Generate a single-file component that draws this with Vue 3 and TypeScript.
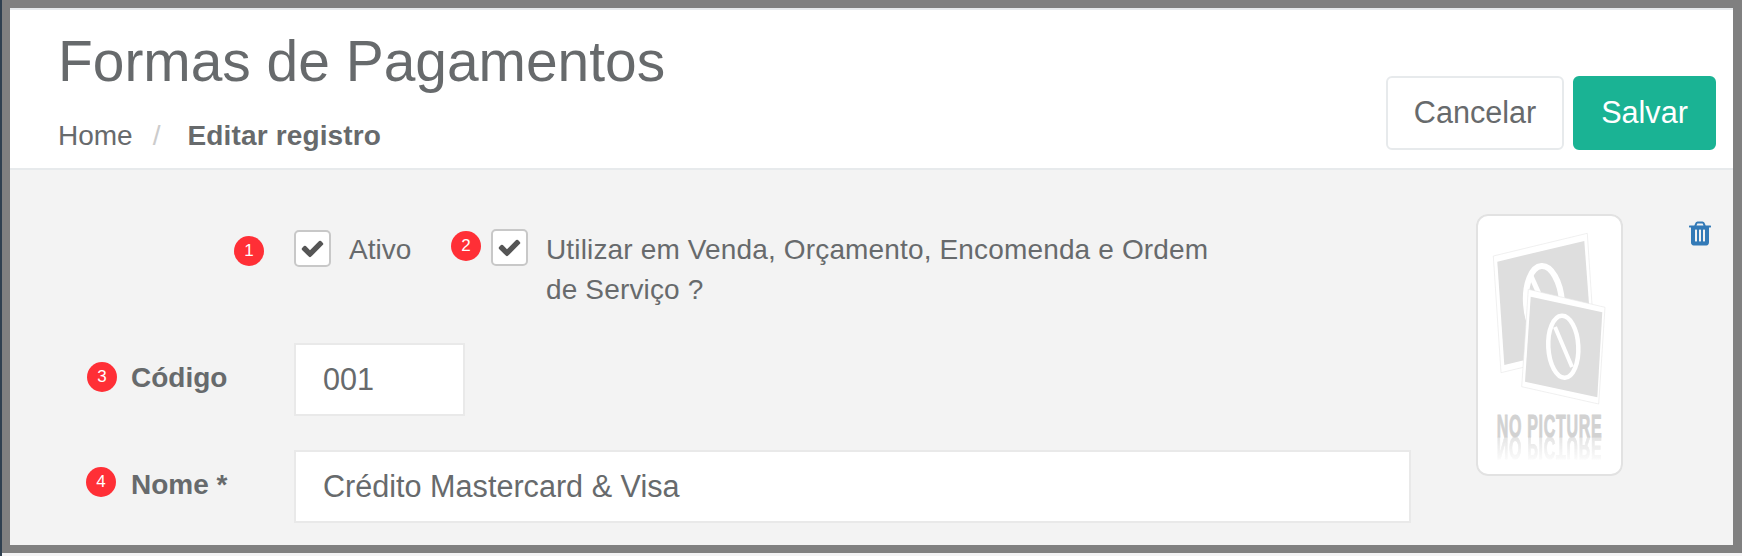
<template>
  <div class="page">
    <div class="frame">
      <header class="top">
        <div class="heading">
          <h2>{{ title }}</h2>
          <ol class="crumbs">
            <li>Home</li>
            <li class="sep">/</li>
            <li class="current">Editar registro</li>
          </ol>
        </div>
        <div class="actions">
          <button class="btn btn-default">Cancelar</button>
          <button class="btn btn-primary">Salvar</button>
        </div>
      </header>

      <main class="content">
        <form class="fields" @submit.prevent>
          <div class="row row-checks">
            <span class="badge b1">1</span>
            <span class="check first">
              <svg viewBox="0 0 1792 1792"><path :d="checkPath" /></svg>
            </span>
            <span class="check-text ativo">Ativo</span>
            <span class="badge b2">2</span>
            <span class="check">
              <svg viewBox="0 0 1792 1792"><path :d="checkPath" /></svg>
            </span>
            <span class="check-text usage">Utilizar em Venda, Orçamento, Encomenda e Ordem de Serviço ?</span>
          </div>

          <div class="row row-code">
            <span class="badge b3">3</span>
            <label>Código</label>
            <input class="input short" v-model="code" />
          </div>

          <div class="row row-name">
            <span class="badge b4">4</span>
            <label>Nome *</label>
            <input class="input" v-model="name" />
          </div>
        </form>

        <div class="picture">
          <svg viewBox="0 0 147 262" width="147" height="262">
            <defs>
              <linearGradient id="fade" gradientUnits="userSpaceOnUse" x1="0" y1="223" x2="0" y2="250">
                <stop offset="0" stop-color="#fff" stop-opacity="0.6" />
                <stop offset="1" stop-color="#fff" stop-opacity="0" />
              </linearGradient>
              <mask id="fadeMask" maskUnits="userSpaceOnUse" x="0" y="223" width="147" height="30">
                <rect x="0" y="223" width="147" height="30" fill="url(#fade)" />
              </mask>
            </defs>
            <polygon points="17.3,42 111.3,19.3 119,136 25,158.700" fill="#fff" stroke="#e6e6e6" stroke-width="0.6" />
            <polygon points="21.3,47.700 108.300,27 116,130 28.300,151" fill="#dedede" />
            <ellipse cx="68" cy="89" rx="18" ry="37" transform="rotate(-4 68 89)" fill="none" stroke="#fff" stroke-width="6" />
            <line x1="55" y1="62" x2="90" y2="140" stroke="#fff" stroke-width="5" />
            <polygon points="52.300,75.300 129,93.300 122.700,190 45.700,172.700" fill="#fff" stroke="#e6e6e6" stroke-width="0.6" />
            <polygon points="54.700,82.700 126.300,98.300 121.300,183.300 49,167.700" fill="#dedede" />
            <ellipse cx="87.300" cy="132.700" rx="15" ry="31" transform="rotate(-3 87.300 132.700)" fill="none" stroke="#fff" stroke-width="4.500" />
            <line x1="79" y1="113" x2="96" y2="153" stroke="#fff" stroke-width="4" />
            <g transform="translate(20.700 223) scale(0.5 1)">
              <text id="nopic" class="nopic" x="0" y="0" fill="#d2d2d2" stroke="#d2d2d2" stroke-width="1">NO PICTURE</text>
            </g>
            <g mask="url(#fadeMask)">
              <g transform="translate(20.700 223) scale(0.5 -1)">
                <use href="#nopic" />
              </g>
            </g>
          </svg>
        </div>

        <a class="trash" title="Remover">
          <svg viewBox="0 0 1408 1536" width="22" height="25"><path :d="trashPath" /></svg>
        </a>
      </main>
    </div>
  </div>
</template>

<script setup lang="ts">
import { ref } from 'vue'

const title = 'Formas de Pagamentos'
const code = ref('001')
const name = ref('Crédito Mastercard & Visa')

// glifos do font-awesome
const checkPath =
  'M1671 566q0 40-28 68l-724 724-136 136q-28 28-68 28t-68-28l-136-136-362-362q-28-28-28-68t28-68l136-136q28-28 68-28t68 28l294 295 656-657q28-28 68-28t68 28l136 136q28 28 28 68z'
const trashPath =
  'M512 1248v-704q0-14-9-23t-23-9h-64q-14 0-23 9t-9 23v704q0 14 9 23t23 9h64q14 0 23-9t9-23zm256 0v-704q0-14-9-23t-23-9h-64q-14 0-23 9t-9 23v704q0 14 9 23t23 9h64q14 0 23-9t9-23zm256 0v-704q0-14-9-23t-23-9h-64q-14 0-23 9t-9 23v704q0 14 9 23t23 9h64q14 0 23-9t9-23zm-544-992h448l-48-117q-7-9-17-11h-317q-10 2-17 11zm928 32v64q0 14-9 23t-23 9h-96v948q0 83-47 143.500t-113 60.500h-832q-66 0-113-58.500t-47-141.500v-952h-96q-14 0-23-9t-9-23v-64q0-14 9-23t23-9h309l70-167q15-37 54-63t79-26h320q40 0 79 26t54 63l70 167h309q14 0 23 9t9 23z'
</script>

<style>
html,
body {
  margin: 0;
  background: #f3f3f4;
}
</style>

<style scoped>
.page {
  width: 1742px;
  height: 556px;
  box-sizing: border-box;
  padding-bottom: 3px;
  border-left: 2px solid #2f4050;
  background: #f3f3f4;
  font-family: 'Liberation Sans', Arial, sans-serif;
  font-size: 28px;
  line-height: 40px;
  color: #676a6c;
  overflow: hidden;
}

.frame {
  height: 100%;
  box-sizing: border-box;
  border: 8px solid #808080;
  border-right-width: 9px;
  display: flex;
  flex-direction: column;
  background: #f3f3f3;
}

.top {
  height: 162px;
  box-sizing: border-box;
  display: flex;
  justify-content: space-between;
  background: #fff;
  border-top: 2px solid #e7eaec;
  border-bottom: 2px solid #e7eaec;
  padding: 0 17px 0 48px;
}

h2 {
  margin: 20px 0 0;
  font-size: 56.9px;
  font-weight: 400;
  line-height: 62px;
}

.crumbs {
  list-style: none;
  display: flex;
  margin: 24px 0 0;
  padding: 0;
}

.sep {
  color: #ccc;
  margin: 0 27px 0 20px;
}

.current {
  font-weight: 700;
  letter-spacing: 0.15px;
}

.actions {
  display: flex;
  gap: 9px;
  margin-top: 66px;
  align-items: flex-start;
}

.btn {
  height: 74px;
  box-sizing: border-box;
  border-radius: 6px;
  font: inherit;
  font-size: 30.6px;
  padding: 0 0 2px;
}

.btn-default {
  width: 178px;
  background: #fff;
  border: 2px solid #e7eaec;
  color: #676a6c;
}

.btn-primary {
  width: 143px;
  background: #1ab394;
  border: 2px solid #1ab394;
  color: #fff;
}

.content {
  flex: 1;
  display: flex;
  align-items: flex-start;
}

.fields {
  width: 1402px;
  padding-top: 59px;
  flex-shrink: 0;
}

.row {
  position: relative;
  display: flex;
}

.row-checks {
  padding-left: 284px;
  height: 114px;
}

.check {
  width: 37px;
  height: 37px;
  box-sizing: border-box;
  border: 2px solid #c8c8c8;
  border-radius: 5px;
  background: #fff;
  display: flex;
  align-items: center;
  justify-content: center;
  flex-shrink: 0;
}

.check.first {
  margin-top: 1px;
}

.check svg {
  width: 25px;
  height: 25px;
  fill: #555;
}

.check-text {
  margin-left: 18px;
  margin-top: 1px;
}

.ativo {
  width: 142px;
}

.usage {
  width: 670px;
  letter-spacing: 0.15px;
}

.row-code {
  height: 107px;
}

label {
  width: 284px;
  box-sizing: border-box;
  padding-left: 121px;
  font-weight: 700;
  margin-top: 15px;
}

.input {
  width: 1117px;
  height: 73px;
  box-sizing: border-box;
  border: 2px solid #e9e9e9;
  background: #fff;
  padding: 0 27px;
  font: inherit;
  font-size: 30.6px;
  color: #676a6c;
  outline: none;
}

.input.short {
  width: 171px;
}

.badge {
  position: absolute;
  width: 30px;
  height: 30px;
  border-radius: 50%;
  background: #ff2f36;
  color: #fff;
  font-size: 17px;
  line-height: 29px;
  text-align: center;
}

.b1 {
  left: 224px;
  top: 7px;
}

.b2 {
  left: 441px;
  top: 2px;
}

.b3 {
  left: 77px;
  top: 19px;
}

.b4 {
  left: 76px;
  top: 17px;
}

.picture {
  width: 147px;
  height: 262px;
  box-sizing: border-box;
  margin: 44px 0 0 64px;
  border-radius: 12px;
  background: #fff;
  box-shadow: inset 0 0 0 2px #e2e2e2;
  flex-shrink: 0;
}

.picture svg {
  display: block;
}

.nopic {
  font-family: 'Liberation Sans', Arial, sans-serif;
  font-size: 32px;
  font-weight: 700;
  letter-spacing: 1.4px;
}

.trash {
  margin: 51px 0 0 66px;
  line-height: 0;
}

.trash svg {
  fill: #337ab7;
}
</style>
